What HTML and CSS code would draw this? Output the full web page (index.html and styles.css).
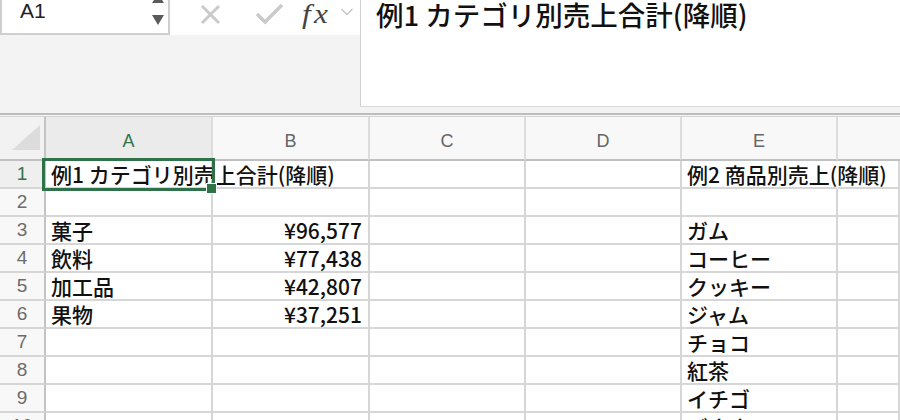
FILE: index.html
```html
<!DOCTYPE html>
<html lang="ja">
<head>
<meta charset="utf-8">
<title>Sheet</title>
<link rel="stylesheet" href="styles.css">
</head>
<body>
<div class="top">
  <div class="left">
    <div class="toolbar">
      <div class="namebox">
        <span class="ref">A1</span>
        <svg class="spin" width="16" height="30" viewBox="0 0 16 30">
          <polygon points="1,3 13,3 7,-6" fill="#5b5b5b"/>
          <polygon points="1,15 13,15 7,25" fill="#5b5b5b"/>
        </svg>
      </div>
      <svg class="ic-x" width="24" height="30" viewBox="0 0 24 30">
        <path d="M3 6 L20 23 M20 6 L3 23" stroke="#cacaca" stroke-width="3" fill="none"/>
      </svg>
      <svg class="ic-ok" width="30" height="30" viewBox="0 0 30 30">
        <path d="M2 14 L10 22 L27 5" stroke="#cacaca" stroke-width="3.4" fill="none"/>
      </svg>
      <span class="fx">fx</span>
      <svg class="ic-chev" width="14" height="20" viewBox="0 0 14 20">
        <path d="M1.5 9 L7 14.5 L12.5 9" stroke="#c4c4c4" stroke-width="1.3" fill="none"/>
      </svg>
    </div>
  </div>
  <div class="formula">
    <div class="formula-text">例1 カテゴリ別売上合計(降順)</div>
  </div>
</div>
<div class="dbl"></div>
<div class="sheet">
  <div class="corner"><svg width="44" height="42" viewBox="0 0 44 42"><polygon points="40,8 40,33 12,33" fill="#dcdcdc"/></svg></div>
  <div class="hd sel">A</div>
  <div class="hd">B</div>
  <div class="hd">C</div>
  <div class="hd">D</div>
  <div class="hd">E</div>
  <div class="hd last"></div>

  <div class="rh sel">1</div>
  <div class="c a1"><span class="txt">例1 カテゴリ別売上合計(降順)</span><span class="handle"></span></div>
  <div class="c"></div>
  <div class="c"></div>
  <div class="c"></div>
  <div class="c nor">例2 商品別売上(降順)</div>
  <div class="c"></div>

  <div class="rh">2</div>
  <div class="c"></div><div class="c"></div><div class="c"></div><div class="c"></div><div class="c"></div><div class="c"></div>

  <div class="rh">3</div>
  <div class="c">菓子</div><div class="c num">¥96,577</div><div class="c"></div><div class="c"></div><div class="c">ガム</div><div class="c"></div>

  <div class="rh">4</div>
  <div class="c">飲料</div><div class="c num">¥77,438</div><div class="c"></div><div class="c"></div><div class="c">コーヒー</div><div class="c"></div>

  <div class="rh">5</div>
  <div class="c">加工品</div><div class="c num">¥42,807</div><div class="c"></div><div class="c"></div><div class="c">クッキー</div><div class="c"></div>

  <div class="rh">6</div>
  <div class="c">果物</div><div class="c num">¥37,251</div><div class="c"></div><div class="c"></div><div class="c">ジャム</div><div class="c"></div>

  <div class="rh">7</div>
  <div class="c"></div><div class="c"></div><div class="c"></div><div class="c"></div><div class="c">チョコ</div><div class="c"></div>

  <div class="rh">8</div>
  <div class="c"></div><div class="c"></div><div class="c"></div><div class="c"></div><div class="c">紅茶</div><div class="c"></div>

  <div class="rh">9</div>
  <div class="c"></div><div class="c"></div><div class="c"></div><div class="c"></div><div class="c">イチゴ</div><div class="c"></div>

  <div class="rh">10</div>
  <div class="c"></div><div class="c"></div><div class="c"></div><div class="c"></div><div class="c">バナナ</div><div class="c"></div>
</div>
</body>
</html>
```
FILE: styles.css
```css
html, body {
  margin: 0;
  padding: 0;
}
body {
  width: 900px;
  height: 420px;
  overflow: hidden;
  background: #ffffff;
  font-family: "Noto Sans CJK JP", "Noto Sans", sans-serif;
  color: #111;
}

.top {
  display: flex;
  height: 113px;
  background: #f3f3f3;
}
.left {
  width: 360px;
  flex: none;
}
.toolbar {
  display: flex;
  align-items: flex-start;
  height: 35px;
  background: #ffffff;
}
.namebox {
  width: 170px;
  height: 35px;
  box-sizing: border-box;
  border: 2px solid #cfcfcf;
  border-top: none;
  display: flex;
  justify-content: space-between;
  align-items: flex-start;
  padding-left: 18px;
  padding-right: 1px;
  background: #fff;
}
.ref {
  font-family: "Liberation Sans", Arial, sans-serif;
  font-size: 21px;
  line-height: 21px;
  color: #222;
}
.spin {
  display: block;
}
.ic-x {
  display: block;
  margin-left: 29px;
}
.ic-ok {
  display: block;
  margin-left: 32px;
}
.fx {
  font-family: "Liberation Serif", "Times New Roman", serif;
  font-style: italic;
  font-size: 28px;
  line-height: 25px;
  padding-top: 1px;
  letter-spacing: 3px;
  color: #444;
  margin-left: 17px;
  width: 38px;
  transform: scaleX(1.12);
  transform-origin: left center;
}
.ic-chev {
  display: block;
}

.formula {
  flex: 1;
  height: 107px;
  box-sizing: border-box;
  background: #ffffff;
  border-left: 1px solid #cfcfcf;
  border-bottom: 1px solid #d9d9d9;
  padding-left: 15px;
}
.formula-text {
  font-size: 27.5px;
  font-weight: 500;
  line-height: 28px;
  color: #111;
  white-space: nowrap;
}

.dbl {
  height: 4px;
  box-sizing: border-box;
  border-top: 2px solid #bdbdbd;
  border-bottom: 1px solid #d3d3d3;
  background: #f5f5f5;
}

.sheet {
  display: grid;
  grid-template-columns: 46px 167px 157px 156px 156px 156px 1fr;
  grid-template-rows: 44px repeat(10, 28px);
}
.sheet > div {
  box-sizing: border-box;
  min-width: 0;
}

.corner {
  background: #f2f2f2;
  border-right: 2px solid #c3c3c3;
  border-bottom: 2px solid #c0c0c0;
}
.corner svg {
  display: block;
}
.hd {
  background: #f8f8f8;
  border-right: 2px solid #dcdcdc;
  border-bottom: 2px solid #c0c0c0;
  display: flex;
  align-items: center;
  justify-content: center;
  padding-top: 6px;
  font-family: "Liberation Sans", Arial, sans-serif;
  font-size: 18px;
  color: #666;
}
.hd.sel {
  background: #ebebeb;
  color: #33744a;
}
.hd.last {
  border-right: none;
}

.rh {
  background: #f8f8f8;
  border-right: 2px solid #c3c3c3;
  border-bottom: 2px solid #d6d6d6;
  display: flex;
  align-items: center;
  justify-content: center;
  font-family: "Liberation Sans", Arial, sans-serif;
  font-size: 19px;
  color: #6c6c6c;
}
.rh.sel {
  background: #efefef;
  color: #33744a;
}

.c {
  border-right: 2px solid #d6d6d6;
  border-bottom: 2px solid #d6d6d6;
  padding: 0 5px;
  font-size: 21px;
  font-weight: 500;
  line-height: 26px;
  white-space: nowrap;
  color: #111;
}
.c.num {
  text-align: right;
  padding-right: 6px;
}
.c.nor {
  border-right-color: transparent;
}

.a1 {
  position: relative;
}
.a1::after {
  content: "";
  position: absolute;
  left: -4px;
  right: -4px;
  top: -3px;
  bottom: -4px;
  border: 3px solid #2f7149;
  z-index: 2;
  pointer-events: none;
}
.txt {
  position: relative;
  z-index: 1;
}
.handle {
  position: absolute;
  right: -6px;
  bottom: -7px;
  width: 11px;
  height: 11px;
  box-sizing: border-box;
  background: #2f7149;
  border: 1px solid #ffffff;
  z-index: 3;
}
```
